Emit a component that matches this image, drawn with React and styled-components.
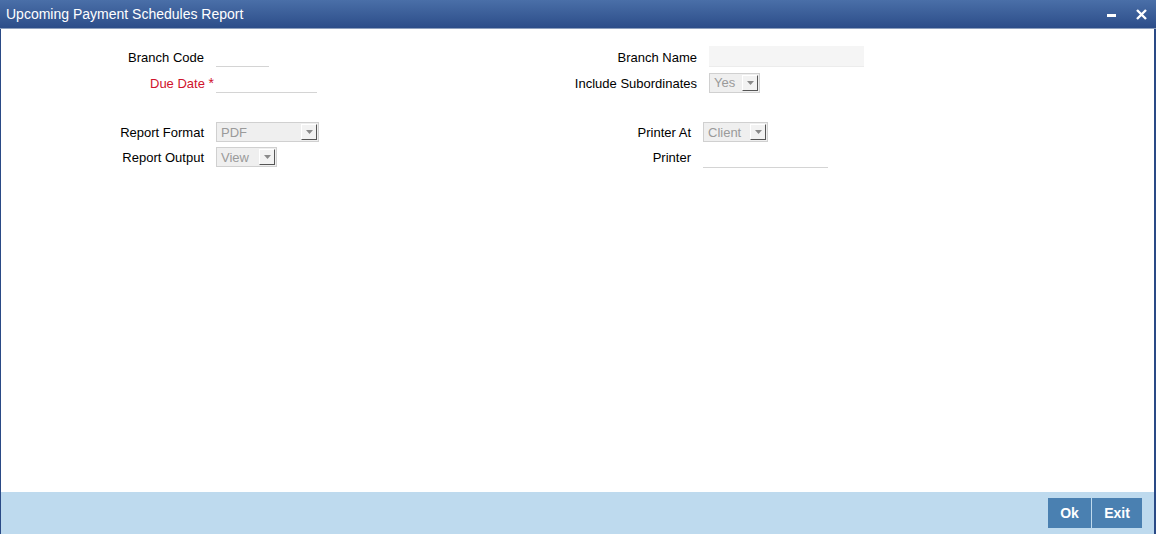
import React from 'react';
import styled, { createGlobalStyle } from 'styled-components';

const GlobalStyle = createGlobalStyle`
	html, body {
		margin: 0;
		padding: 0;
		background: #ffffff;
		font-family: 'Liberation Sans', Arial, sans-serif;
	}
`;

export default function App() {
	return (
		<>
			<GlobalStyle />
			<Window>
				<TitleBar>
					<Title>Upcoming Payment Schedules Report</Title>
					<WindowButtons>
						<svg width='12' height='12' viewBox='0 0 12 12'>
							<rect x='1' y='6' width='9' height='3' fill='#fff' />
						</svg>
						<svg width='13' height='13' viewBox='0 0 13 13'>
							<path d='M2 2 L11 11 M11 2 L2 11' stroke='#fff' strokeWidth='2.4' />
						</svg>
					</WindowButtons>
				</TitleBar>
				<Body>
					<Section>
						<Column>
							<Label>Branch Code</Label>
							<LineInput width={53} />
							<Label required>
								Due Date <Star>*</Star>
							</Label>
							<LineInput width={101} />
						</Column>
						<Column labelWidth={296}>
							<Label>Branch Name</Label>
							<FilledInput />
							<Label>Include Subordinates</Label>
							<Select width={51} value='Yes' />
						</Column>
					</Section>
					<Section second>
						<Column rowHeight={20}>
							<Label>Report Format</Label>
							<Select width={103} value='PDF' />
							<Label>Report Output</Label>
							<Select width={61} value='View' />
						</Column>
						<Column labelWidth={290} rowHeight={20}>
							<Label>Printer At</Label>
							<Select width={65} value='Client' />
							<Label>Printer</Label>
							<LineInput width={125} />
						</Column>
					</Section>
				</Body>
				<Footer>
					<FooterButton width={43}>Ok</FooterButton>
					<FooterButton width={50}>Exit</FooterButton>
				</Footer>
			</Window>
		</>
	);
}

function Select({ width, value }) {
	return (
		<SelectBox width={width}>
			<SelectText>{value}</SelectText>
			<ArrowButton>
				<svg width='7' height='4' viewBox='0 0 7 4'>
					<path d='M0 0 H7 L3.5 4 Z' fill='#8a8a8a' />
				</svg>
			</ArrowButton>
		</SelectBox>
	);
}

const Window = styled.div`
	height: 534px;
	display: flex;
	flex-direction: column;
	border-left: 1px solid #2a4a86;
	border-right: 2px solid #2a4a86;
	box-sizing: border-box;
`;

const TitleBar = styled.div`
	height: 28px;
	display: flex;
	align-items: center;
	justify-content: space-between;
	padding: 0 8px 0 6px;
	background: linear-gradient(#4a6fa8, #2c4d89);
	border-bottom: 1px solid #8d9fbd;
	margin-left: -1px;
	margin-right: -2px;
`;

const Title = styled.div`
	color: #ffffff;
	font-size: 14px;
`;

const WindowButtons = styled.div`
	display: flex;
	align-items: center;
	gap: 17px;
	svg {
		display: block;
	}
`;

const Body = styled.div`
	flex: 1;
	padding-top: 17px;
`;

const Section = styled.div`
	display: flex;
	margin-top: ${(p) => (p.second ? '29px' : '0')};
`;

const Column = styled.div`
	width: ${(p) => (p.labelWidth ? 'auto' : '400px')};
	display: grid;
	grid-template-columns: ${(p) => p.labelWidth || 203}px auto;
	column-gap: 12px;
	row-gap: 5px;
	grid-auto-rows: ${(p) => p.rowHeight || 21}px;
	align-items: center;
	justify-items: start;
`;

const Label = styled.div`
	justify-self: end;
	padding-top: 1px;
	font-size: 13px;
	color: ${(p) => (p.required ? '#d0122c' : '#000000')};
	white-space: nowrap;
	margin-right: ${(p) => (p.required ? '-10px' : '0')};
`;

const Star = styled.span`
	font-size: 14px;
`;

const LineInput = styled.div`
	width: ${(p) => p.width}px;
	height: 21px;
	box-sizing: border-box;
	border-bottom: 1px solid #d4d4d4;
	align-self: start;
`;

const FilledInput = styled.div`
	width: 155px;
	height: 21px;
	background: #f5f5f5;
	border-bottom: 1px solid #ececec;
	box-sizing: border-box;
`;

const SelectBox = styled.div`
	width: ${(p) => p.width}px;
	height: 20px;
	box-sizing: border-box;
	background: #efefef;
	border: 1px solid #d0d0d0;
	display: flex;
	align-items: center;
	justify-content: space-between;
	padding: 0 1px 0 4px;
`;

const SelectText = styled.span`
	font-size: 13px;
	color: #9a9a9a;
`;

const ArrowButton = styled.div`
	width: 16px;
	height: 16px;
	box-sizing: border-box;
	background: #f2f2f2;
	border-top: 1px solid #ffffff;
	border-left: 1px solid #ffffff;
	border-right: 1px solid #555555;
	border-bottom: 1px solid #555555;
	display: flex;
	align-items: center;
	justify-content: center;
`;

const Footer = styled.div`
	height: 42px;
	background: #bedaee;
	display: flex;
	align-items: center;
	justify-content: flex-end;
	gap: 1px;
	padding-right: 12px;
`;

const FooterButton = styled.button`
	width: ${(p) => p.width}px;
	height: 30px;
	padding: 0;
	border: none;
	background: #4a80b1;
	color: #ffffff;
	font-family: 'Liberation Sans', Arial, sans-serif;
	font-size: 14px;
	font-weight: bold;
	cursor: pointer;
`;
